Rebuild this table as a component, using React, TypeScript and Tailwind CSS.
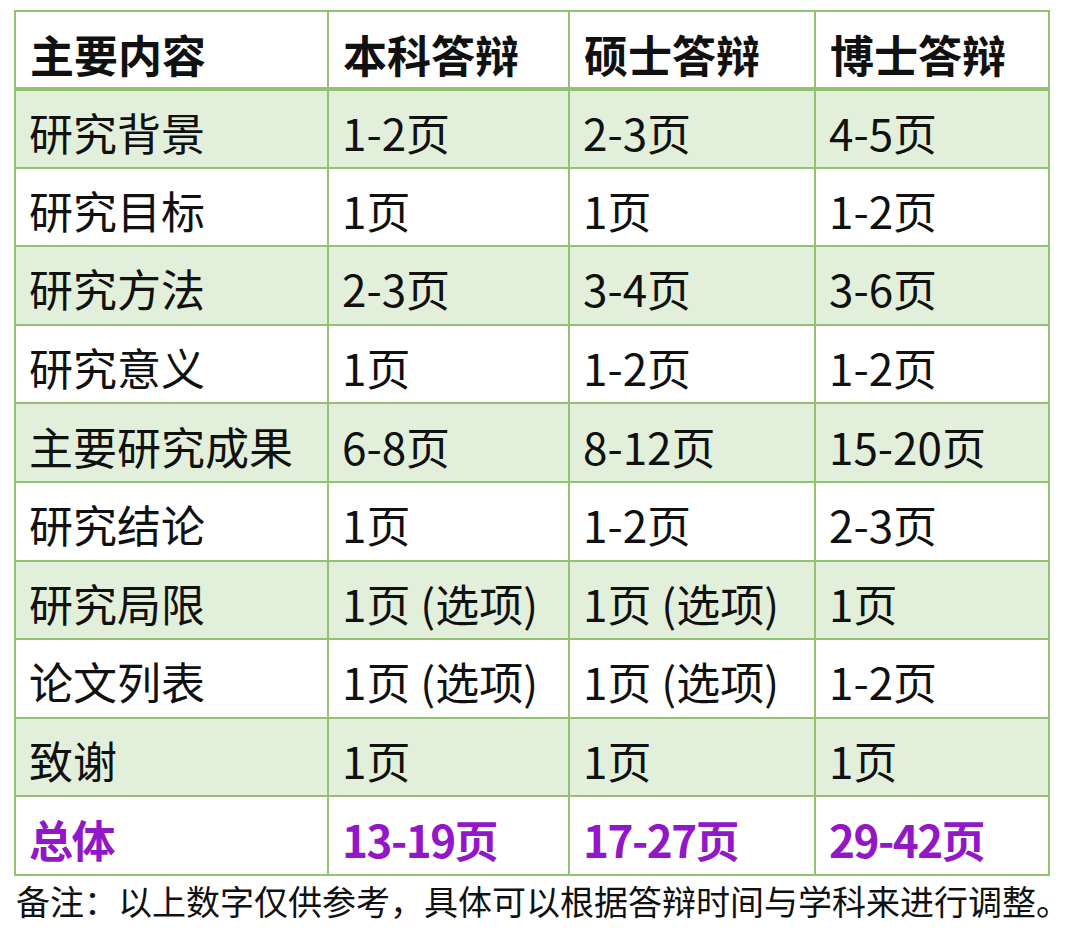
const rows: [string, string, string, string][] = [
  ["研究背景", "1-2页", "2-3页", "4-5页"],
  ["研究目标", "1页", "1页", "1-2页"],
  ["研究方法", "2-3页", "3-4页", "3-6页"],
  ["研究意义", "1页", "1-2页", "1-2页"],
  ["主要研究成果", "6-8页", "8-12页", "15-20页"],
  ["研究结论", "1页", "1-2页", "2-3页"],
  ["研究局限", "1页 (选项)", "1页 (选项)", "1页"],
  ["论文列表", "1页 (选项)", "1页 (选项)", "1-2页"],
  ["致谢", "1页", "1页", "1页"],
];

const headers = ["主要内容", "本科答辩", "硕士答辩", "博士答辩"];
const totals = ["总体", "13-19页", "17-27页", "29-42页"];

const font = { fontFamily: '"Noto Sans CJK SC", sans-serif' };

export default function App() {
  return (
    <div className="w-[1080px] h-[936px] bg-white pt-[10px] pl-[14px]" style={font}>
      <table className="border-collapse table-fixed text-[44px] leading-none text-[#111]">
        <colgroup>
          <col className="w-[313px]" />
          <col className="w-[241px]" />
          <col className="w-[246px]" />
          <col className="w-[234px]" />
        </colgroup>
        <thead>
          <tr className="h-[78px]">
            {headers.map((h) => (
              <th key={h} className="border-2 border-b-[4px] border-[#94c273] pl-[14px] pr-2 pt-[8px] text-left font-bold">
                {h}
              </th>
            ))}
          </tr>
        </thead>
        <tbody>
          {rows.map((r, i) => (
            <tr key={r[0]} className={i % 2 === 0 ? "h-[78.6px] bg-[#e2efda]" : "h-[78.6px] bg-white"}>
              {r.map((c, j) => (
                <td key={j} className="border-2 border-[#94c273] pl-[13px] pr-2 pt-[6px] whitespace-nowrap">
                  {c}
                </td>
              ))}
            </tr>
          ))}
          <tr className="h-[79px] bg-white">
            {totals.map((c) => (
              <td key={c} className="border-2 border-[#94c273] pl-[13px] pr-2 pt-[6px] font-bold tracking-[-1.5px] text-[#9117c8]">
                {c}
              </td>
            ))}
          </tr>
        </tbody>
      </table>
      <p className="text-[34px] leading-[50px] text-[#111] pl-[2px]">
        备注：以上数字仅供参考，具体可以根据答辩时间与学科来进行调整。
      </p>
    </div>
  );
}
